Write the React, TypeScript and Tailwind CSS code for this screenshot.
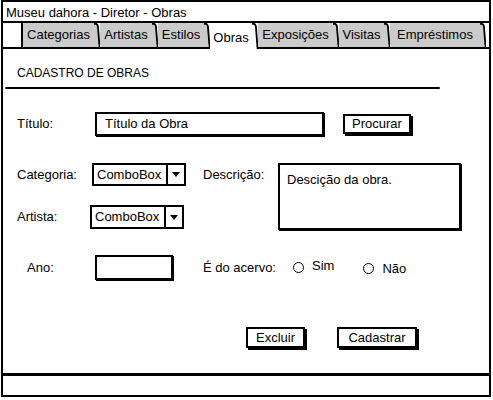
import React from "react";

function Tab({
  label,
  spanW,
  active = false,
  first = false,
}: {
  label: string;
  spanW: string;
  active?: boolean;
  first?: boolean;
}) {
  return (
    <div
      className={`flex h-full ${active ? "" : "border-b-2 border-black"} ${
        first ? "border-l-2 border-black" : ""
      }`}
    >
      <div
        className={`${spanW} flex items-center justify-center ${
          active ? "bg-white pt-[3px]" : "bg-[#cbcbcb]"
        }`}
      >
        {label}
      </div>
      <svg
        className="w-[6px] h-full"
        viewBox="0 0 6 24"
        preserveAspectRatio="none"
      >
        <path
          d="M0 0 H1.5 Q3.5 0 4 3 L6 24 H0 Z"
          fill={active ? "#ffffff" : "#cbcbcb"}
        />
        <path
          d="M0 0.8 H1.5 Q3.4 0.8 3.9 3.2 L5.6 24"
          fill="none"
          stroke="#000"
          strokeWidth="1.8"
        />
      </svg>
    </div>
  );
}

function Combo() {
  return (
    <div className="w-[94px] h-full border-2 border-black flex bg-white">
      <div className="flex-1 flex items-center pl-[3px]">ComboBox</div>
      <div className="w-[18px] border-l-2 border-black flex items-center justify-center">
        <svg width="8" height="5" viewBox="0 0 8 5">
          <path d="M0 0 H8 L4 5 Z" fill="#000" />
        </svg>
      </div>
    </div>
  );
}

function Radio() {
  return (
    <div className="w-[11px] h-[11px] rounded-full border-[1.5px] border-black bg-white shrink-0" />
  );
}

export default function App() {
  return (
    <div className="w-[493px] h-[400px] bg-white font-['Liberation_Sans',Arial,sans-serif] text-[13px] text-black">
      <div className="ml-[1px] w-[490px] h-[397px] border-2 border-black flex flex-col">
        <div className="h-[21px] shrink-0 border-b-2 border-black pl-[3px] pt-[1px] leading-[19px]">
          Museu dahora - Diretor - Obras
        </div>
        <div className="h-[26px] shrink-0 flex">
          <div className="w-[18px] border-b-2 border-black" />
          <Tab label="Categorias" spanW="w-[71px]" first />
          <Tab label="Artistas" spanW="w-[52px]" />
          <Tab label="Estilos" spanW="w-[46px]" />
          <Tab label="Obras" spanW="w-[42px]" active />
          <Tab label="Exposições" spanW="w-[75px]" />
          <Tab label="Visitas" spanW="w-[45px]" />
          <Tab label="Empréstimos" spanW="w-[90px]" />
          <div className="flex-1 border-b-2 border-black" />
        </div>

        <div className="h-[324px] shrink-0 flex flex-col">
          <div className="mt-[17px] ml-[14px] h-[14px] text-[12px] leading-[14px]">
            CADASTRO DE OBRAS
          </div>
          <div className="mt-[7px] ml-[2px] w-[435px] h-[2px] bg-black rounded-full" />

          <div className="mt-[23px] h-[24px] flex items-center">
            <div className="ml-[14px] w-[78px]">Título:</div>
            <div className="w-[229px] h-[24px] border-2 border-black flex items-center pl-[8px] shadow-[1px_1px_0_#000]">
              Título da Obra
            </div>
            <div className="ml-[19px] w-[68px] h-[20px] border-2 border-black shadow-[2px_2px_0_#000] flex items-center justify-center">
              Procurar
            </div>
          </div>

          <div className="mt-[27px] h-[67px] flex">
            <div className="ml-[14px] w-[186px] flex flex-col">
              <div className="h-[23px] flex items-center">
                <div className="w-[75px]">Categoria:</div>
                <Combo />
              </div>
              <div className="mt-[19px] h-[24px] flex items-center">
                <div className="w-[73px]">Artista:</div>
                <Combo />
              </div>
            </div>
            <div className="w-[75px] h-[23px] flex items-center">Descrição:</div>
            <div className="w-[183px] h-[67px] border-2 border-black pl-[7px] pt-[5px] shadow-[1px_1px_0_#000]">
              Descição da obra.
            </div>
          </div>

          <div className="mt-[25px] h-[25px] flex items-center">
            <div className="ml-[24px] w-[68px]">Ano:</div>
            <div className="w-[78px] h-[25px] border-2 border-black shadow-[1px_1px_0_#000]" />
            <div className="ml-[30px] w-[90px]">É do acervo:</div>
            <Radio />
            <div className="ml-[8px] -mt-[3px]">Sim</div>
            <div className="ml-[29px] mt-[2px]">
              <Radio />
            </div>
            <div className="ml-[8px] mt-[3px]">Não</div>
          </div>

          <div className="mt-[47px] h-[23px] flex">
            <div className="ml-[243px] w-[59px] h-[21px] border-2 border-black shadow-[2px_2px_0_#000] flex items-center justify-center">
              Excluir
            </div>
            <div className="ml-[32px] w-[80px] h-[21px] border-2 border-black shadow-[2px_2px_0_#000] flex items-center justify-center">
              Cadastrar
            </div>
          </div>
        </div>

        <div className="h-[22px] shrink-0 border-t-[3px] border-black" />
      </div>
    </div>
  );
}
